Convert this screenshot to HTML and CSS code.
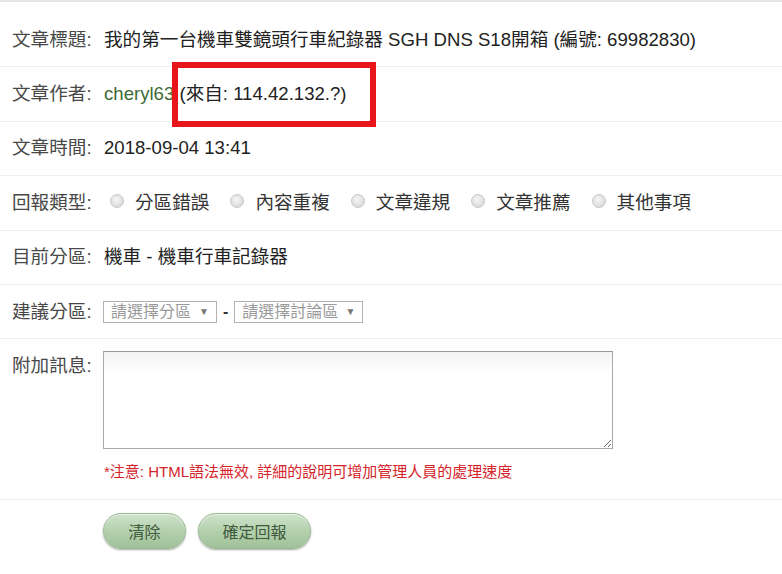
FILE: index.html
```html
<!DOCTYPE html>
<html lang="zh-Hant">
<head>
<meta charset="utf-8">
<title>檢舉文章</title>
<link rel="stylesheet" href="styles.css">
</head>
<body>
<div class="form">
  <div class="row">
    <div class="label">文章標題:</div>
    <div class="value">我的第一台機車雙鏡頭行車紀錄器 SGH DNS S18開箱 (編號: 69982830)</div>
  </div>
  <div class="row author">
    <div class="label">文章作者:</div>
    <div class="value"><span class="user">cheryl63</span> (來自: 114.42.132.?)</div>
    <div class="highlight"></div>
  </div>
  <div class="row">
    <div class="label">文章時間:</div>
    <div class="value">2018-09-04 13:41</div>
  </div>
  <div class="row">
    <div class="label">回報類型:</div>
    <div class="value radios">
      <span class="opt"><span class="radio"></span><span class="opt-text">分區錯誤</span></span>
      <span class="opt"><span class="radio"></span><span class="opt-text">內容重複</span></span>
      <span class="opt"><span class="radio"></span><span class="opt-text">文章違規</span></span>
      <span class="opt"><span class="radio"></span><span class="opt-text">文章推薦</span></span>
      <span class="opt"><span class="radio"></span><span class="opt-text">其他事項</span></span>
    </div>
  </div>
  <div class="row">
    <div class="label">目前分區:</div>
    <div class="value">機車 - 機車行車記錄器</div>
  </div>
  <div class="row">
    <div class="label">建議分區:</div>
    <div class="value selects">
      <span class="select sel-1">請選擇分區<span class="arrow">▼</span></span>
      <span class="dash">-</span>
      <span class="select sel-2">請選擇討論區<span class="arrow">▼</span></span>
    </div>
  </div>
  <div class="row msg-row">
    <div class="label msg-label">附加訊息:</div>
    <div class="value msg">
      <textarea class="textarea"></textarea>
      <div class="note">*注意: HTML語法無效, 詳細的說明可增加管理人員的處理速度</div>
    </div>
  </div>
  <div class="buttons">
    <button class="btn btn-clear" type="button">清除</button>
    <button class="btn btn-submit" type="button">確定回報</button>
  </div>
</div>
</body>
</html>
```

FILE: styles.css
```css
html, body {
  margin: 0;
  padding: 0;
  background: #fff;
}

body {
  font-family: "Liberation Sans", "Noto Sans CJK TC", sans-serif;
  font-size: 18.6px;
  color: #333;
  width: 782px;
  height: 574px;
  overflow: hidden;
}

.form {
  border-top: 2px solid #e6e6e6;
  padding-top: 11px;
}

.row {
  position: relative;
  display: grid;
  grid-template-columns: 92px 1fr;
  align-items: center;
  height: 53.4px;
  padding-left: 12px;
  border-bottom: 1px solid #f0f0f0;
  line-height: 22px;
}

.label {
  color: #484848;
  white-space: nowrap;
}

.value {
  color: #222;
  white-space: nowrap;
}

.user {
  color: #3d6b35;
}

.highlight {
  position: absolute;
  left: 172px;
  top: -5px;
  width: 204px;
  height: 65px;
  box-sizing: border-box;
  border: 6px solid #e8151b;
}

.radios {
  display: flex;
  align-items: center;
  padding-left: 6px;
}

.opt {
  display: flex;
  align-items: center;
  margin-right: 21px;
}

.radio {
  width: 14px;
  height: 14px;
  box-sizing: border-box;
  border-radius: 50%;
  border: 1px solid #c8c8c8;
  background: radial-gradient(circle at 45% 40%, #f6f6f6 0%, #e2e2e2 55%, #cdcdcd 100%);
  margin-right: 11px;
  margin-top: -3px;
}

.opt-text {
  color: #333;
}

.selects {
  display: flex;
  align-items: center;
  margin-left: -1px;
}

.select {
  display: flex;
  align-items: center;
  justify-content: space-between;
  box-sizing: border-box;
  height: 22px;
  border: 1px solid #b3b3b3;
  padding: 0 7px 0 7px;
  font-size: 16px;
  color: #9a9a9a;
  line-height: 20px;
}

.sel-1 { width: 114px; }
.sel-2 { width: 129px; }

.arrow {
  font-size: 10px;
  color: #777;
  margin-left: 4px;
}

.dash {
  font-weight: bold;
  color: #333;
  margin: 0 6px;
  font-size: 16px;
}

.msg-row {
  height: auto;
  align-items: start;
  padding-top: 11.6px;
  padding-bottom: 17px;
}

.msg-label {
  margin-top: 4px;
}

.msg {
  margin-left: -1px;
}

.textarea {
  display: block;
  width: 510px;
  height: 98px;
  box-sizing: border-box;
  margin: 0;
  border: 1px solid #a9a9a9;
  border-top-color: #999;
  background: linear-gradient(#f3f3f3 0, #fbfbfb 16px, #fff 18px, #fff 100%);
  resize: both;
  font-family: inherit;
}

.note {
  margin-top: 12px;
  margin-left: 1px;
  font-size: 15px;
  line-height: 21px;
  color: #d6232a;
}

.buttons {
  display: flex;
  gap: 12px;
  padding: 13px 0 0 103px;
}

.btn {
  height: 36px;
  box-sizing: border-box;
  border-radius: 18px;
  border: 1px solid #98b891;
  background: linear-gradient(#cfe3cb 0%, #b6d2b0 45%, #9fc198 100%);
  box-shadow: 0 1px 2px rgba(0, 0, 0, 0.35), inset 0 1px 0 rgba(255, 255, 255, 0.6);
  color: #3f5a3c;
  font-family: "Liberation Sans", "Noto Sans CJK TC", sans-serif;
  font-size: 16px;
  padding: 0;
  cursor: pointer;
}

.btn-clear { width: 83px; }
.btn-submit { width: 113px; }
```
